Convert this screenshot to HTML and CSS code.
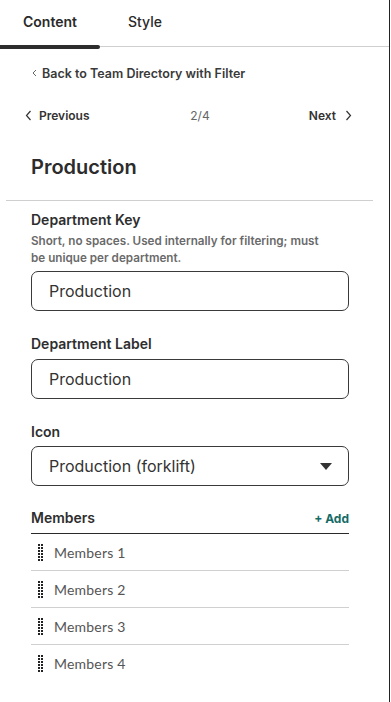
FILE: index.html
```html
<!DOCTYPE html>
<html>
<head>
<meta charset="utf-8">
<link rel="stylesheet" href="styles.css">
</head>
<body>
<div class="panel">
  <div class="tabs">
    <div class="tab active">Content</div>
    <div class="tab">Style</div>
  </div>

  <div class="back">
    <svg class="chev-sm" width="5" height="8" viewBox="0 0 5 8"><path d="M4 1 L1 4 L4 7" fill="none" stroke="#666" stroke-width="1"/></svg>
    <span>Back to Team Directory with Filter</span>
  </div>

  <div class="pager">
    <div class="prev">
      <svg width="7" height="11" viewBox="0 0 7 11"><path d="M5.5 1 L1.5 5.5 L5.5 10" fill="none" stroke="#333" stroke-width="1.2"/></svg>
      <span>Previous</span>
    </div>
    <div class="count">2/4</div>
    <div class="next">
      <span>Next</span>
      <svg width="7" height="11" viewBox="0 0 7 11"><path d="M1.5 1 L5.5 5.5 L1.5 10" fill="none" stroke="#333" stroke-width="1.2"/></svg>
    </div>
  </div>

  <h1 class="title">Production</h1>
  <div class="divider"></div>

  <div class="fields">
    <div class="field">
      <div class="label">Department Key</div>
      <div class="help">Short, no spaces. Used internally for filtering; must be unique per department.</div>
      <div class="input">Production</div>
    </div>
    <div class="field">
      <div class="label">Department Label</div>
      <div class="input">Production</div>
    </div>
    <div class="field">
      <div class="label">Icon</div>
      <div class="input select">
        <span>Production (forklift)</span>
        <svg width="12" height="7" viewBox="0 0 12 7"><path d="M0 0 H12 L6 7 Z" fill="#333"/></svg>
      </div>
    </div>

    <div class="members">
      <div class="members-head">
        <span class="label">Members</span>
        <span class="add">+ Add</span>
      </div>
      <div class="row"><svg class="grip" width="5" height="17" viewBox="0 0 5 17"><g fill="#222"><rect x="0" y="0" width="2" height="2"/><rect x="3" y="0" width="2" height="2"/><rect x="0" y="3" width="2" height="2"/><rect x="3" y="3" width="2" height="2"/><rect x="0" y="6" width="2" height="2"/><rect x="3" y="6" width="2" height="2"/><rect x="0" y="9" width="2" height="2"/><rect x="3" y="9" width="2" height="2"/><rect x="0" y="12" width="2" height="2"/><rect x="3" y="12" width="2" height="2"/><rect x="0" y="15" width="2" height="2"/><rect x="3" y="15" width="2" height="2"/></g></svg><span>Members 1</span></div>
      <div class="row"><svg class="grip" width="5" height="17" viewBox="0 0 5 17"><g fill="#222"><rect x="0" y="0" width="2" height="2"/><rect x="3" y="0" width="2" height="2"/><rect x="0" y="3" width="2" height="2"/><rect x="3" y="3" width="2" height="2"/><rect x="0" y="6" width="2" height="2"/><rect x="3" y="6" width="2" height="2"/><rect x="0" y="9" width="2" height="2"/><rect x="3" y="9" width="2" height="2"/><rect x="0" y="12" width="2" height="2"/><rect x="3" y="12" width="2" height="2"/><rect x="0" y="15" width="2" height="2"/><rect x="3" y="15" width="2" height="2"/></g></svg><span>Members 2</span></div>
      <div class="row"><svg class="grip" width="5" height="17" viewBox="0 0 5 17"><g fill="#222"><rect x="0" y="0" width="2" height="2"/><rect x="3" y="0" width="2" height="2"/><rect x="0" y="3" width="2" height="2"/><rect x="3" y="3" width="2" height="2"/><rect x="0" y="6" width="2" height="2"/><rect x="3" y="6" width="2" height="2"/><rect x="0" y="9" width="2" height="2"/><rect x="3" y="9" width="2" height="2"/><rect x="0" y="12" width="2" height="2"/><rect x="3" y="12" width="2" height="2"/><rect x="0" y="15" width="2" height="2"/><rect x="3" y="15" width="2" height="2"/></g></svg><span>Members 3</span></div>
      <div class="row last"><svg class="grip" width="5" height="17" viewBox="0 0 5 17"><g fill="#222"><rect x="0" y="0" width="2" height="2"/><rect x="3" y="0" width="2" height="2"/><rect x="0" y="3" width="2" height="2"/><rect x="3" y="3" width="2" height="2"/><rect x="0" y="6" width="2" height="2"/><rect x="3" y="6" width="2" height="2"/><rect x="0" y="9" width="2" height="2"/><rect x="3" y="9" width="2" height="2"/><rect x="0" y="12" width="2" height="2"/><rect x="3" y="12" width="2" height="2"/><rect x="0" y="15" width="2" height="2"/><rect x="3" y="15" width="2" height="2"/></g></svg><span>Members 4</span></div>
    </div>
  </div>
</div>
</body>
</html>
```

FILE: styles.css
```css
* { box-sizing: border-box; }
html, body { margin: 0; padding: 0; background: #fff; }
body {
  font-family: Inter, "Noto Sans", sans-serif;
  color: #2f2f2f;
}
.panel {
  width: 390px;
  height: 702px;
  border-right: 1px solid #222;
  background: #fff;
}
.tabs {
  display: flex;
  height: 47px;
  border-bottom: 1px solid #cfcfcf;
  position: relative;
}
.tab {
  width: 100px;
  display: flex;
  align-items: center;
  justify-content: center;
  font-size: 14px;
  font-weight: 500;
  color: #2a2a2a;
  padding-bottom: 3px;
}
.tab:nth-child(2) { width: 90px; }
.tab.active { position: relative; font-weight: 600; }
.tab.active::after {
  content: "";
  position: absolute;
  left: 0;
  right: 0;
  bottom: -3px;
  height: 4px;
  background: #2d2d2d;
  border-radius: 0 3px 3px 0;
}
.back {
  display: flex;
  align-items: center;
  gap: 5px;
  margin: 18px 0 0 32px;
  height: 16px;
  font-size: 12.5px;
  font-weight: 600;
  color: #3a3a3a;
}
.pager {
  display: grid;
  grid-template-columns: 152px 46px 1fr;
  align-items: center;
  margin: 26px 37px 0 25px;
  height: 16px;
  font-size: 12px;
  font-weight: 600;
  color: #333;
}
.prev, .next { display: flex; align-items: center; gap: 7px; }
.next { justify-content: flex-end; gap: 9px; }
.count { font-weight: 400; color: #666; text-align: center; }
.title {
  margin: 31px 0 0 31px;
  height: 26px;
  line-height: 26px;
  font-size: 20px;
  font-weight: 600;
  color: #2c2c2c;
}
.divider {
  margin: 20px 0 0 6px;
  width: 367px;
  height: 1px;
  background: #cfcfcf;
}
.fields {
  padding: 10px 40px 0 31px;
  display: flex;
  flex-direction: column;
  gap: 24px;
}
.label {
  font-size: 14px;
  font-weight: 600;
  color: #2e2e2e;
  line-height: 18px;
}
.help {
  max-width: 296px;
  font-size: 11.7px;
  font-weight: 600;
  color: #6a6a6a;
  line-height: 17px;
  margin-top: 4px;
  margin-bottom: -2px;
}
.input {
  margin-top: 6px;
  height: 40px;
  border: 1px solid #3a3a3a;
  border-radius: 7px;
  display: flex;
  align-items: center;
  padding: 0 17px 0 17px;
  font-size: 16px;
  color: #333;
}
.field:nth-child(3) .input { margin-top: 5px; }
.select { justify-content: space-between; padding-right: 16px; }
.members { margin-top: -2px; }
.members-head {
  display: flex;
  justify-content: space-between;
  align-items: center;
  height: 26px;
  padding-bottom: 5px;
  border-bottom: 1.5px solid #2a2a2a;
}
.add {
  font-size: 12px;
  font-weight: 700;
  color: #176b67;
}
.row {
  display: flex;
  align-items: center;
  height: 37px;
  padding-left: 7px;
  gap: 11px;
  border-bottom: 1px solid #d0d0d0;
  font-family: Lato, "Open Sans", sans-serif;
  font-size: 14px;
  letter-spacing: 0.2px;
  color: #555;
}
.row.last { border-bottom: none; }
.grip { flex: none; }
```
